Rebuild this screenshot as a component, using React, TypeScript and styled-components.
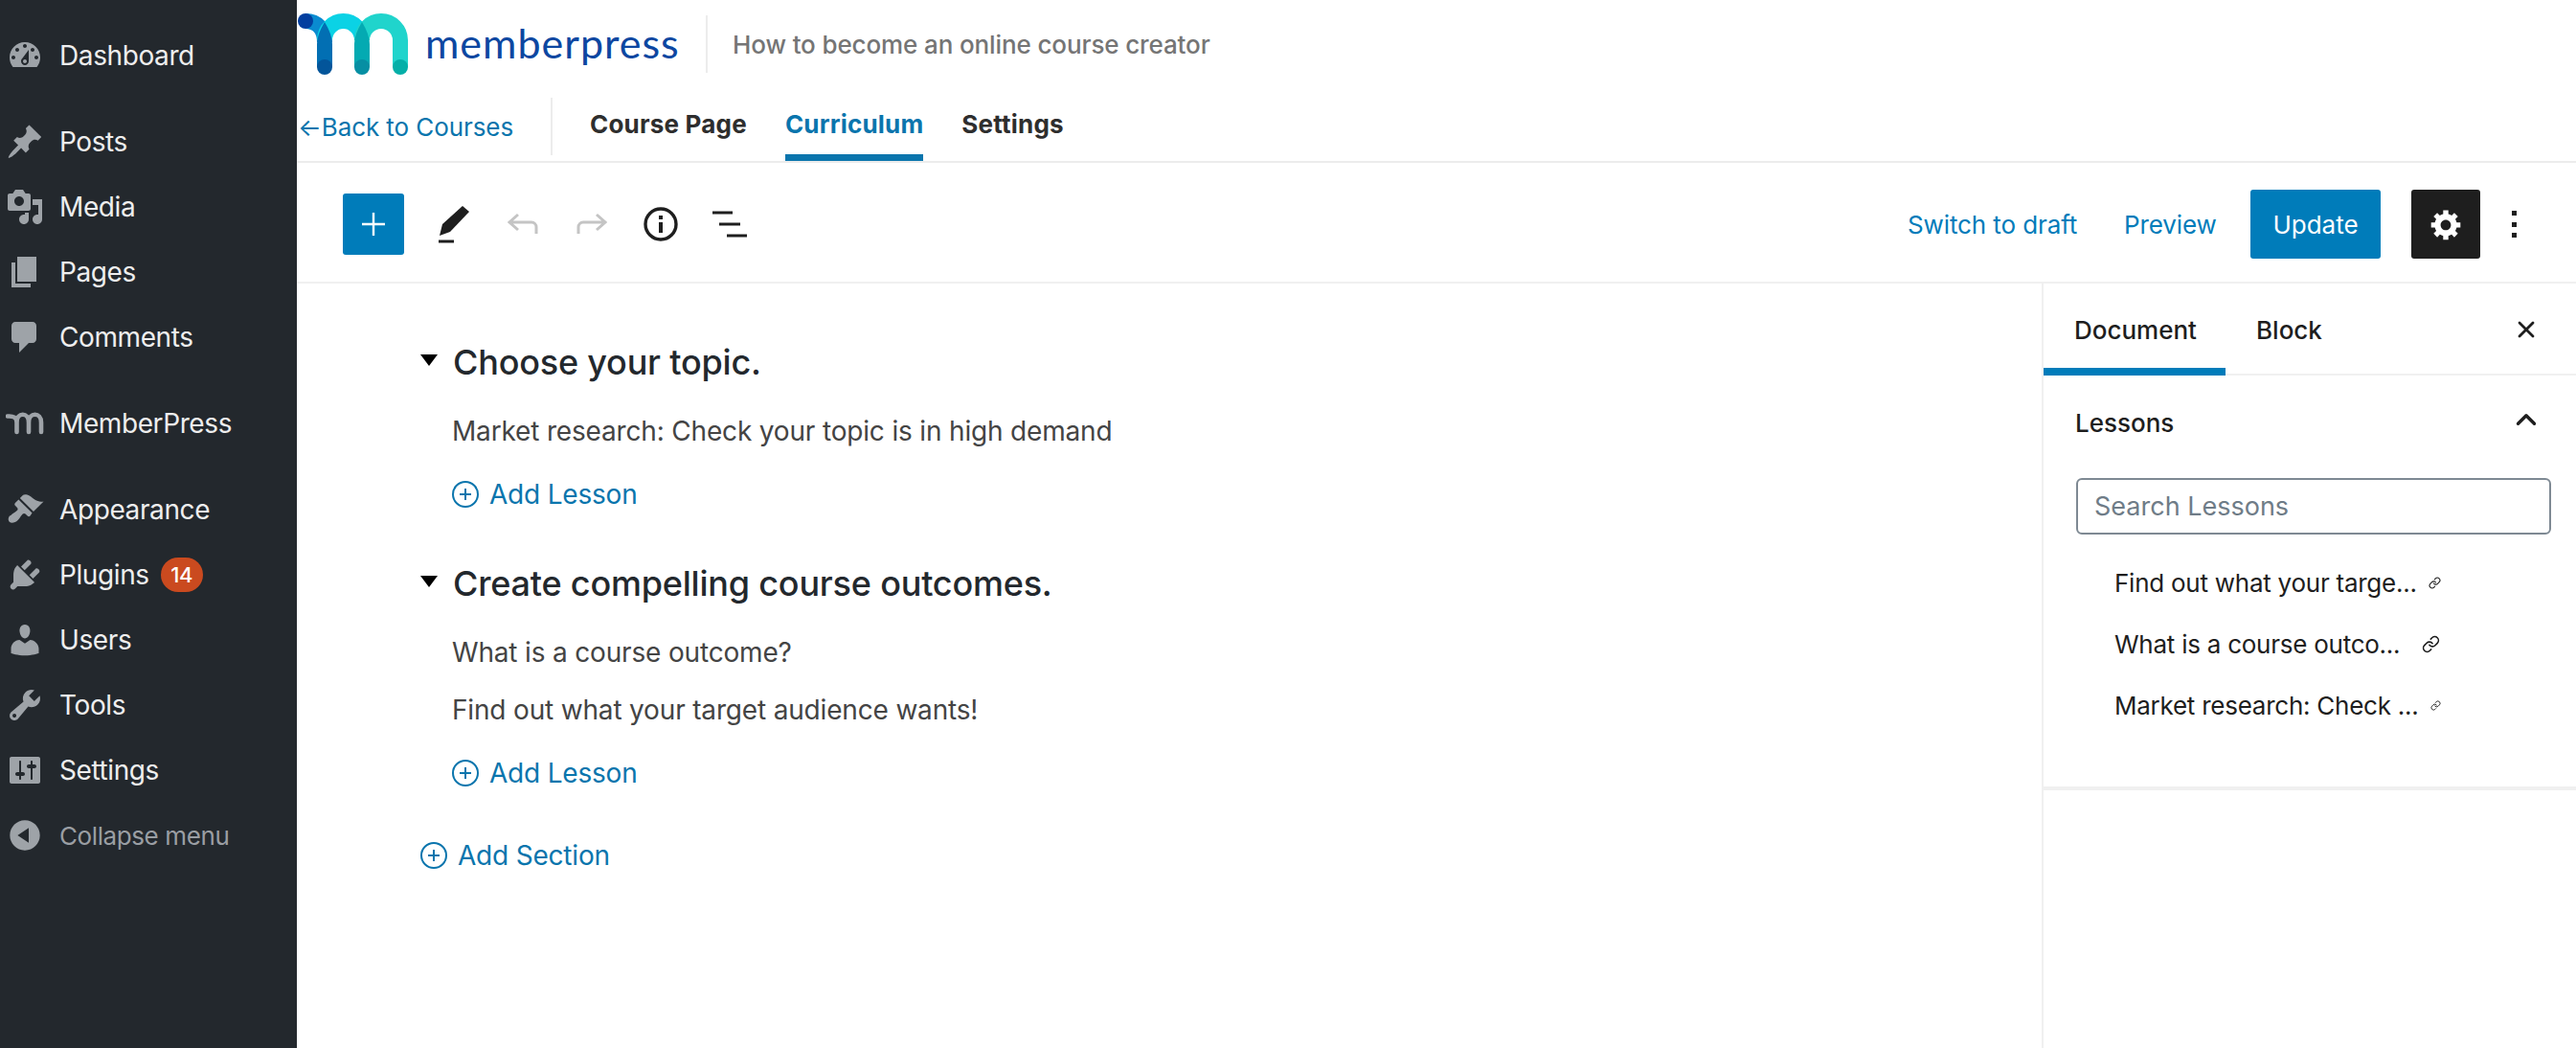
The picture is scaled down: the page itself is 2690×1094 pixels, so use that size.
import React from 'react';
import styled, { createGlobalStyle } from 'styled-components';
import { Link as LinkIcon, X, ChevronUp } from 'lucide-react';

const Global = createGlobalStyle`
  html, body { margin: 0; padding: 0; background: #fff; overflow: hidden; }
  * { box-sizing: border-box; }
  body { font-family: Inter, "Liberation Sans", sans-serif; }
`;

const Shell = styled.div`
  display: grid;
  grid-template-columns: 310px 1fr;
  height: 1094px;
  width: 2690px;
  overflow: hidden;
`;

/* ---------- admin menu ---------- */
const AdminMenu = styled.nav`
  background: #23282d;
  padding-top: 24px;
  display: flex;
  flex-direction: column;
`;
const MenuRow = styled.div<{ $gap?: boolean; $muted?: boolean }>`
  height: 68px;
  margin-top: ${p => (p.$gap ? '22px' : '0')};
  display: flex;
  align-items: center;
  padding-left: 6px;
  gap: 16px;
  letter-spacing: -0.4px;
  color: ${p => (p.$muted ? '#9a9ea3' : '#eeeeee')};
  font-size: ${p => (p.$muted ? '26px' : '28px')};
`;
const MenuGlyph = styled.svg`
  width: 40px;
  height: 40px;
  fill: #9ea3a8;
  flex: none;
`;
const Badge = styled.span`
  display: inline-flex;
  align-items: center;
  justify-content: center;
  width: 44px;
  height: 36px;
  border-radius: 18px;
  background: #ca4a1f;
  color: #fff;
  font-size: 22px;
  font-weight: 500;
  margin-left: -4px;
`;

const icons: Record<string, string> = {
  dashboard: 'M3.76 16h12.48c1.1-1.37 1.76-3.11 1.76-5 0-4.42-3.58-8-8-8s-8 3.58-8 8c0 1.89.66 3.63 1.76 5zM10 4c.55 0 1 .45 1 1s-.45 1-1 1-1-.45-1-1 .45-1 1-1zM6 6c.55 0 1 .45 1 1s-.45 1-1 1-1-.45-1-1 .45-1 1-1zm8 0c.55 0 1 .45 1 1s-.45 1-1 1-1-.45-1-1 .45-1 1-1zm-5.37 5.55L12 7v6c0 1.1-.9 2-2 2s-2-.9-2-2c0-.57.24-1.08.63-1.45zM4 10c.55 0 1 .45 1 1s-.45 1-1 1-1-.45-1-1 .45-1 1-1zm12 0c.55 0 1 .45 1 1s-.45 1-1 1-1-.45-1-1 .45-1 1-1zm-5 3c0-.55-.45-1-1-1s-1 .45-1 1 .45 1 1 1 1-.45 1-1z',
  post: 'M10.44 3.02l1.82-1.82 6.36 6.35-1.83 1.82c-1.05-.68-2.48-.57-3.41.36l-.75.75c-.92.93-1.04 2.35-.35 3.41l-1.83 1.82-2.41-2.41-2.8 2.79c-.42.42-3.38 2.71-3.8 2.29s1.86-3.39 2.28-3.81l2.79-2.79L4.1 9.36l1.83-1.82c1.05.69 2.48.57 3.4-.36l.75-.75c.93-.92 1.05-2.35.36-3.41z',
  media: 'M13 11V4c0-.55-.45-1-1-1h-1.67L9 1H5L3.67 3H2c-.55 0-1 .45-1 1v7c0 .55.45 1 1 1h10c.55 0 1-.45 1-1zM7 4.5c1.38 0 2.5 1.12 2.5 2.5S8.38 9.5 7 9.5 4.5 8.38 4.5 7 5.62 4.5 7 4.5zM14 6h5v10.5c0 1.38-1.12 2.5-2.5 2.5S14 17.88 14 16.5s1.12-2.5 2.5-2.5c.17 0 .34.02.5.05V9h-3V6zm-4 8.05V13h2v3.5c0 1.38-1.12 2.5-2.5 2.5S7 17.88 7 16.5 8.12 14 9.5 14c.17 0 .34.02.5.05z',
  page: 'M6 15V2h10v13H6zm-1 1h8v2H3V5h2v11z',
  comments: 'M5 2h9c1.1 0 2 .9 2 2v7c0 1.1-.9 2-2 2h-2l-5 5v-5H5c-1.1 0-2-.9-2-2V4c0-1.1.9-2 2-2z',
  appearance: 'M14.48 11.06L7.41 3.99l1.5-1.5c.5-.56 2.3-.47 3.51.32 1.21.8 1.43 1.28 2.91 2.1 1.18.64 2.45 1.26 4.45.85zm-.71.71L6.7 4.7 4.93 6.47c-.39.39-.39 1.02 0 1.41l1.06 1.06c.39.39.39 1.03 0 1.42-.6.6-1.43 1.11-2.21 1.69-.35.26-.7.53-1.01.84C1.43 13.23.91 15.33 1.9 16.32c.99 1 3.09.47 4.43-.86.31-.31.58-.66.85-1.02.57-.78 1.08-1.61 1.69-2.21.39-.39 1.02-.39 1.41 0l1.06 1.06c.39.39 1.02.39 1.41 0z',
  plugins: 'M13.11 4.36L9.87 7.6 8 5.73l3.24-3.24c.35-.34 1.05-.2 1.56.32.52.51.66 1.21.31 1.55zm-8 1.77l.91-1.12 9.01 9.01-1.19.84c-.71.71-2.63 1.16-3.82 1.16H6.14L4.9 17.26c-.59.59-1.54.59-2.12 0-.59-.58-.59-1.53 0-2.12l1.24-1.24v-3.88c0-1.13.4-3.19 1.09-3.89zm7.26 3.97l3.24-3.24c.34-.35 1.04-.21 1.55.31.52.51.66 1.21.31 1.55l-3.24 3.25z',
  users: 'M10 9.25c-2.27 0-2.73-3.44-2.73-3.44C7 4.02 7.82 2 9.97 2c2.16 0 2.98 2.02 2.71 3.81 0 0-.41 3.44-2.68 3.44zm0 2.57L12.72 10c2.39 0 4.52 2.33 4.52 4.53v2.49s-3.65 1.13-7.24 1.13c-3.65 0-7.24-1.13-7.24-1.13v-2.49c0-2.25 1.94-4.48 4.47-4.48z',
  tools: 'M16.68 9.77c-1.34 1.34-3.3 1.67-4.95.99l-5.41 6.52c-.99.99-2.59.99-3.58 0s-.99-2.59 0-3.57l6.52-5.42c-.68-1.65-.35-3.61.99-4.95 1.28-1.28 3.12-1.62 4.72-1.06l-2.89 2.89 2.82 2.82 2.86-2.87c.53 1.58.18 3.39-1.08 4.65zM3.81 16.21c.4.39 1.04.39 1.43 0 .4-.4.4-1.04 0-1.43-.39-.4-1.03-.4-1.43 0-.39.39-.39 1.03 0 1.43z',
  settings: 'M18 16V4c0-.55-.45-1-1-1H3c-.55 0-1 .45-1 1v12c0 .55.45 1 1 1h14c.55 0 1-.45 1-1zM8 11h1c.55 0 1 .45 1 1s-.45 1-1 1H8v1.5c0 .28-.22.5-.5.5s-.5-.22-.5-.5V13H6c-.55 0-1-.45-1-1s.45-1 1-1h1V5.5c0-.28.22-.5.5-.5s.5.22.5.5V11zm5-2h-1c-.55 0-1-.45-1-1s.45-1 1-1h1V5.5c0-.28.22-.5.5-.5s.5.22.5.5V7h1c.55 0 1 .45 1 1s-.45 1-1 1h-1v5.5c0 .28-.22.5-.5.5s-.5-.22-.5-.5V9z',
  collapse: 'M10 2.16c4.33 0 7.84 3.51 7.84 7.84s-3.51 7.84-7.84 7.84S2.16 14.33 2.16 10 5.71 2.16 10 2.16zm2 11.72V6.12L6.18 9.97z',
};

const Dash = ({ name }: { name: string }) => (
  <MenuGlyph viewBox="0 0 20 20"><path fillRule="evenodd" d={icons[name]} /></MenuGlyph>
);

const MemberGlyph = () => (
  <MenuGlyph viewBox="0 0 40 40" style={{ fill: 'none' }}>
    <path d="M2 12.5 C8 12 11.5 14 11.5 19 V29 M11.5 19 C11.5 8 24 8 24 19 V29 M24 19 C24 8 37 8 37 19 V29" stroke="#9ea3a8" strokeWidth="4.6" strokeLinecap="round" />
  </MenuGlyph>
);

/* ---------- top header ---------- */
const Main = styled.div`
  display: flex;
  flex-direction: column;
  min-width: 0;
`;
const Header = styled.header`
  height: 170px;
  border-bottom: 2px solid #ececec;
  display: flex;
  flex-direction: column;
`;
const BrandRow = styled.div`
  height: 92px;
  padding: 14px 0 0 1px;
  display: flex;
  align-items: flex-start;
`;
const LogoMark = styled.svg`
  width: 115px;
  height: 64px;
  flex: none;
`;
const WordMark = styled.span`
  margin: 6px 0 0 18px;
  font-family: Lato, sans-serif;
  font-size: 43px;
  line-height: 50px;
  color: #0d47a1;
  letter-spacing: 1px;
  width: 293px;
`;
const CourseTitle = styled.span`
  height: 60px;
  margin-top: 2px;
  border-left: 2px solid #ececec;
  padding-left: 26px;
  display: flex;
  align-items: center;
  font-size: 26px;
  font-weight: 500;
  letter-spacing: -0.12px;
  color: #757575;
`;
const NavRow = styled.div`
  flex: 1;
  display: flex;
  align-items: flex-start;
  padding-left: 1px;
`;
const BackLink = styled.span`
  font-size: 26px;
  color: #0a75ad;
  width: 266px;
  height: 60px;
  margin-top: 10px;
  display: flex;
  align-items: center;
  white-space: nowrap;
  border-right: 2px solid #ececec;
  letter-spacing: -0.08px;
`;
const NavTabs = styled.div`
  display: flex;
  gap: 40px;
  padding-left: 39px;
  height: 76px;
`;
const NavTab = styled.span<{ $on?: boolean }>`
  font-size: 26px;
  font-weight: 700;
  color: ${p => (p.$on ? '#0a75ad' : '#2e2e2e')};
  border-bottom: 7px solid ${p => (p.$on ? '#0a75ad' : 'transparent')};
  display: flex;
  align-items: center;
  padding-top: 5px;
  letter-spacing: 0.2px;
`;

/* ---------- editor toolbar ---------- */
const Toolbar = styled.div`
  height: 126px;
  border-bottom: 2px solid #f0f0f0;
  display: flex;
  align-items: center;
  padding: 4px 62px 0 48px;
  flex: none;
`;
const Inserter = styled.span`
  width: 64px;
  height: 64px;
  background: #007cba;
  border-radius: 3px;
  display: flex;
  align-items: center;
  justify-content: center;
`;
const ToolGlyph = styled.svg<{ $w: number; $ml: number }>`
  width: ${p => p.$w}px;
  height: 40px;
  margin-left: ${p => p.$ml}px;
  flex: none;
`;
const Spacer = styled.div`
  flex: 1;
`;
const ToolLink = styled.span<{ $w: number }>`
  font-size: 26px;
  color: #007cba;
  width: ${p => p.$w}px;
  white-space: nowrap;
  letter-spacing: -0.1px;
`;
const UpdateButton = styled.span`
  width: 136px;
  height: 72px;
  background: #007cba;
  color: #fff;
  border-radius: 3px;
  font-size: 26px;
  display: flex;
  align-items: center;
  justify-content: center;
`;
const GearButton = styled.span`
  width: 72px;
  height: 72px;
  margin-left: 32px;
  background: #1e1e1e;
  border-radius: 3px;
  display: flex;
  align-items: center;
  justify-content: center;
`;
const Dots = styled.span`
  margin-left: 33px;
  display: flex;
  flex-direction: column;
  gap: 6.5px;
`;
const Dot = styled.i`
  width: 5px;
  height: 5px;
  background: #1e1e1e;
  display: block;
`;

/* ---------- content ---------- */
const Body = styled.div`
  flex: 1;
  display: grid;
  grid-template-columns: 1822px 1fr;
  min-height: 0;
`;
const Editor = styled.section`
  padding: 58px 0 0 129px;
`;
const SectionBlock = styled.div`
  margin-bottom: 52px;
`;
const SectionHead = styled.div`
  display: flex;
  align-items: center;
  height: 48px;
  gap: 16px;
`;
const Caret = styled.i`
  width: 0;
  height: 0;
  border-left: 9.5px solid transparent;
  border-right: 9.5px solid transparent;
  border-top: 12px solid #000;
  margin-top: -4px;
`;
const SectionTitle = styled.h2`
  margin: 0;
  font-size: 36px;
  font-weight: 500;
  color: #23282d;
  letter-spacing: -0.2px;
`;
const LessonList = styled.div`
  padding: 31px 0 0 33px;
  display: flex;
  flex-direction: column;
  gap: 26px;
`;
const Lesson = styled.div`
  font-size: 28px;
  line-height: 34px;
  letter-spacing: -0.17px;
  color: #444;
`;
const AddLink = styled.div<{ $indent?: boolean }>`
  display: flex;
  align-items: center;
  gap: 11px;
  margin: ${p => (p.$indent ? '32px 0 0 33px' : '0')};
  height: 34px;
  font-size: 28px;
  letter-spacing: -0.2px;
  color: #0a75ad;
`;
const AddGlyph = styled.svg`
  width: 28px;
  height: 28px;
  flex: none;
`;

/* ---------- side panel ---------- */
const Panel = styled.aside`
  border-left: 2px solid #f0f0f0;
`;
const PanelTabs = styled.div`
  height: 96px;
  border-bottom: 2px solid #f0f0f0;
  display: flex;
  align-items: stretch;
`;
const PanelTab = styled.span<{ $on?: boolean; $w: number }>`
  width: ${p => p.$w}px;
  padding-left: 32px;
  padding-top: 8px;
  display: flex;
  align-items: center;
  font-size: 26px;
  font-weight: 500;
  color: #1e1e1e;
  border-bottom: 8px solid ${p => (p.$on ? '#007cba' : 'transparent')};
  margin-bottom: -2px;
`;
const PanelClose = styled.span`
  margin-left: auto;
  margin-right: 38px;
  padding-top: 2px;
  display: flex;
  align-items: center;
  color: #1e1e1e;
`;
const PanelSection = styled.div`
  height: 433px;
  border-bottom: 4px solid #f0f0f0;
  padding: 0 26px 0 33px;
`;
const SectionRow = styled.div`
  height: 98px;
  display: flex;
  align-items: center;
  justify-content: space-between;
  font-size: 26px;
  font-weight: 500;
  color: #1e1e1e;
  padding-right: 9px;
`;
const SectionChevron = styled.span`
  display: flex;
  margin-bottom: 6px;
`;
const SearchBox = styled.div`
  width: 496px;
  height: 59px;
  margin: 9px 0 0 1px;
  border: 2px solid #7e8993;
  border-radius: 6px;
  padding-left: 17px;
  display: flex;
  align-items: center;
  font-size: 27px;
  color: #6f7c87;
`;
const PickList = styled.div`
  padding: 18px 0 0 41px;
  display: flex;
  flex-direction: column;
`;
const PickRow = styled.div`
  height: 64px;
  display: flex;
  align-items: center;
  width: 360px;
`;
const PickName = styled.span<{ $w: number }>`
  font-size: 26px;
  letter-spacing: -0.25px;
  color: #1e1e1e;
  width: ${p => p.$w}px;
  flex: none;
  white-space: nowrap;
`;
const PickLink = styled.span`
  display: flex;
  color: #1e1e1e;
`;

const menuTop: { name: string; label: string; gap?: boolean }[] = [
  { name: 'dashboard', label: 'Dashboard' },
  { name: 'post', label: 'Posts', gap: true },
  { name: 'media', label: 'Media' },
  { name: 'page', label: 'Pages' },
  { name: 'comments', label: 'Comments' },
];
const menuBottom: { name: string; label: string }[] = [
  { name: 'users', label: 'Users' },
  { name: 'tools', label: 'Tools' },
  { name: 'settings', label: 'Settings' },
];

const Logo = () => (
  <LogoMark viewBox="0 0 115 64" fill="none">
    <path d="M8 8 C20 8 28 16 28 30" stroke="#0a8bd0" strokeWidth="16" />
    <path d="M28 28 A19.5 20 0 0 1 67 28" stroke="#0bd2e5" strokeWidth="16" />
    <path d="M67 28 A20 20 0 0 1 107 28 V56" stroke="#20d4cc" strokeWidth="16" />
    <path d="M20 56 V32 Q20 22 28 9 Q36 22 36 32 V56 Z" fill="#026fb3" />
    <path d="M59 56 V32 Q59 22 67 9 Q75 22 75 32 V56 Z" fill="#04aab2" />
    <circle cx="8" cy="8" r="8" fill="#033f9f" />
    <circle cx="28" cy="56" r="8" fill="#03559a" />
    <circle cx="67" cy="56" r="8" fill="#068fa3" />
    <circle cx="107" cy="56" r="8" fill="#04afa8" />
  </LogoMark>
);

const PlusCircle = () => (
  <AddGlyph viewBox="0 0 28 28" fill="none" stroke="#0a75ad" strokeWidth="2">
    <circle cx="14" cy="14" r="13" />
    <path d="M14 8v12M8 14h12" />
  </AddGlyph>
);

export default function App() {
  return (
    <>
      <Global />
      <Shell>
        <AdminMenu>
          {menuTop.map(m => (
            <MenuRow key={m.name} $gap={m.gap}>
              <Dash name={m.name} />
              {m.label}
            </MenuRow>
          ))}
          <MenuRow $gap>
            <MemberGlyph />
            MemberPress
          </MenuRow>
          <MenuRow $gap>
            <Dash name="appearance" />
            Appearance
          </MenuRow>
          <MenuRow>
            <Dash name="plugins" />
            Plugins
            <Badge>14</Badge>
          </MenuRow>
          {menuBottom.map(m => (
            <MenuRow key={m.name}>
              <Dash name={m.name} />
              {m.label}
            </MenuRow>
          ))}
          <MenuRow $muted>
            <Dash name="collapse" />
            Collapse menu
          </MenuRow>
        </AdminMenu>

        <Main>
          <Header>
            <BrandRow>
              <Logo />
              <WordMark>memberpress</WordMark>
              <CourseTitle>How to become an online course creator</CourseTitle>
            </BrandRow>
            <NavRow>
              <BackLink>←Back to Courses</BackLink>
              <NavTabs>
                <NavTab>Course Page</NavTab>
                <NavTab $on>Curriculum</NavTab>
                <NavTab>Settings</NavTab>
              </NavTabs>
            </NavRow>
          </Header>

          <Toolbar>
            <Inserter>
              <svg width="24" height="24" viewBox="0 0 24 24" stroke="#fff" strokeWidth="2.4" fill="none">
                <path d="M12 0v24M0 12h24" />
              </svg>
            </Inserter>
            <ToolGlyph $w={32} $ml={36} viewBox="0 0 32 40">
              <path d="M25 1l7 6-20 21-11 4 3-12z" fill="#1e1e1e" />
              <path d="M0 38h16" stroke="#1e1e1e" strokeWidth="3" />
            </ToolGlyph>
            <ToolGlyph $w={32} $ml={40} viewBox="0 0 32 40" fill="none" stroke="#c4c4c4" strokeWidth="3">
              <path d="M11 10L2 18l9 8M2 18h23a5 5 0 0 1 5 5v7" />
            </ToolGlyph>
            <ToolGlyph $w={32} $ml={40} viewBox="0 0 32 40" fill="none" stroke="#c4c4c4" strokeWidth="3">
              <path d="M21 10l9 8-9 8M30 18H7a5 5 0 0 0-5 5v7" />
            </ToolGlyph>
            <ToolGlyph $w={36} $ml={38} viewBox="0 0 36 40" fill="none">
              <circle cx="18" cy="20" r="16" stroke="#1e1e1e" strokeWidth="3.4" />
              <path d="M16 11h4v4h-4zM16 18h4v11h-4z" fill="#1e1e1e" />
            </ToolGlyph>
            <ToolGlyph $w={36} $ml={36} viewBox="0 0 36 40" stroke="#1e1e1e" strokeWidth="3.2" fill="none">
              <path d="M0 8h21M7 20h22M15 32h21" />
            </ToolGlyph>
            <Spacer />
            <ToolLink $w={226}>Switch to draft</ToolLink>
            <ToolLink $w={132}>Preview</ToolLink>
            <UpdateButton>Update</UpdateButton>
            <GearButton>
              <svg width="36" height="36" viewBox="0 0 19 20" fill="#fff">
                <path fillRule="evenodd" d="M18 12h-2.18c-.17.7-.44 1.35-.81 1.93l1.54 1.54-2.1 2.1-1.54-1.54c-.58.36-1.23.63-1.91.79V19H8v-2.18c-.68-.16-1.33-.43-1.91-.79l-1.54 1.54-2.12-2.12 1.54-1.54c-.36-.58-.63-1.23-.79-1.91H1V9.03h2.17c.16-.7.44-1.35.8-1.94L2.43 5.55l2.1-2.1 1.54 1.54c.58-.37 1.24-.64 1.93-.81V2h3v2.18c.68.16 1.33.43 1.91.79l1.54-1.54 2.12 2.12-1.54 1.54c.36.59.64 1.24.8 1.94H18V12zm-8.5 1.5c1.66 0 3-1.34 3-3s-1.34-3-3-3-3 1.34-3 3 1.34 3 3 3z" />
              </svg>
            </GearButton>
            <Dots><Dot /><Dot /><Dot /></Dots>
          </Toolbar>

          <Body>
            <Editor>
              <SectionBlock>
                <SectionHead><Caret /><SectionTitle>Choose your topic.</SectionTitle></SectionHead>
                <LessonList>
                  <Lesson>Market research: Check your topic is in high demand</Lesson>
                </LessonList>
                <AddLink $indent><PlusCircle />Add Lesson</AddLink>
              </SectionBlock>
              <SectionBlock>
                <SectionHead><Caret /><SectionTitle>Create compelling course outcomes.</SectionTitle></SectionHead>
                <LessonList>
                  <Lesson>What is a course outcome?</Lesson>
                  <Lesson>Find out what your target audience wants!</Lesson>
                </LessonList>
                <AddLink $indent><PlusCircle />Add Lesson</AddLink>
              </SectionBlock>
              <AddLink><PlusCircle />Add Section</AddLink>
            </Editor>

            <Panel>
              <PanelTabs>
                <PanelTab $on $w={190}>Document</PanelTab>
                <PanelTab $w={120}>Block</PanelTab>
                <PanelClose><X size={28} strokeWidth={2.4} /></PanelClose>
              </PanelTabs>
              <PanelSection>
                <SectionRow>
                  Lessons
                  <SectionChevron><ChevronUp size={34} strokeWidth={2.4} /></SectionChevron>
                </SectionRow>
                <SearchBox>Search Lessons</SearchBox>
                <PickList>
                  <PickRow>
                    <PickName $w={328}>Find out what your targe...</PickName>
                    <PickLink><LinkIcon size={13} strokeWidth={2} /></PickLink>
                  </PickRow>
                  <PickRow>
                    <PickName $w={321}>What is a course outco...</PickName>
                    <PickLink><LinkIcon size={19} strokeWidth={2} /></PickLink>
                  </PickRow>
                  <PickRow>
                    <PickName $w={330}>Market research: Check ...</PickName>
                    <PickLink><LinkIcon size={11} strokeWidth={2} /></PickLink>
                  </PickRow>
                </PickList>
              </PanelSection>
            </Panel>
          </Body>
        </Main>
      </Shell>
    </>
  );
}
